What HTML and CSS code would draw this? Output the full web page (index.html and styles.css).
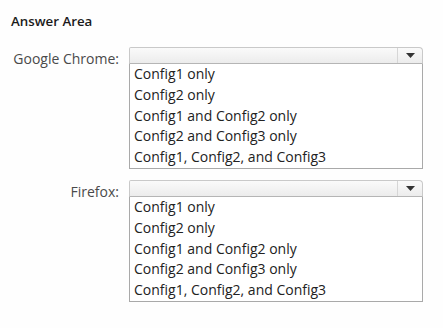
FILE: index.html
```html
<!DOCTYPE html>
<html lang="en">
<head>
  <meta charset="UTF-8">
  <title>Answer Area</title>
  <link rel="stylesheet" href="styles.css">
</head>
<body>
  <h1 class="title">Answer Area</h1>

  <div class="question">
    <div class="label">Google Chrome:</div>
    <div class="field">
      <div class="combo">
        <span class="combo-value"></span>
        <span class="combo-arrow"><svg width="9" height="5" viewBox="0 0 9 5"><path d="M0 0H9L4.5 5Z" fill="#333"/></svg></span>
      </div>
      <ul class="options">
        <li>Config1 only</li>
        <li>Config2 only</li>
        <li>Config1 and Config2 only</li>
        <li>Config2 and Config3 only</li>
        <li>Config1, Config2, and Config3</li>
      </ul>
    </div>
  </div>

  <div class="question">
    <div class="label">Firefox:</div>
    <div class="field">
      <div class="combo">
        <span class="combo-value"></span>
        <span class="combo-arrow"><svg width="9" height="5" viewBox="0 0 9 5"><path d="M0 0H9L4.5 5Z" fill="#333"/></svg></span>
      </div>
      <ul class="options">
        <li>Config1 only</li>
        <li>Config2 only</li>
        <li>Config1 and Config2 only</li>
        <li>Config2 and Config3 only</li>
        <li>Config1, Config2, and Config3</li>
      </ul>
    </div>
  </div>
</body>
</html>
```

FILE: styles.css
```css
body {
  margin: 0;
  padding: 12px 0 0 11px;
  font-family: "Open Sans", "Noto Sans", sans-serif;
  background-color: #fefefe;
  color: #222;
}
.title {
  margin: 0 0 17px 0;
  font-size: 13.3px;
  font-weight: 600;
  color: #1a1a1a;
}
.question {
  display: flex;
  align-items: flex-start;
  margin-bottom: 11px;
}
.label {
  width: 108px;
  text-align: right;
  font-size: 14px;
  color: #4a4a4a;
  padding-top: 2px;
  margin-right: 10px;
}
.field {
  width: 294px;
}
.combo {
  display: flex;
  height: 15px;
  border: 1px solid #c9c9c9;
  border-bottom-color: #b5b5b5;
  border-radius: 2px 4px 0 0;
  background: linear-gradient(#fafafa, #ececec);
}
.combo-value {
  flex: 1;
}
.combo-arrow {
  width: 24px;
  border-left: 1px solid #d6d6d6;
  display: flex;
  align-items: center;
  justify-content: center;
}
.options {
  list-style: none;
  margin: 0;
  padding: 0 0 0 4px;
  border: 1px solid #a9a9a9;
  border-top: none;
  background-color: #fff;
}
.options li {
  font-size: 14px;
  line-height: 20.8px;
  color: #222;
}
```
